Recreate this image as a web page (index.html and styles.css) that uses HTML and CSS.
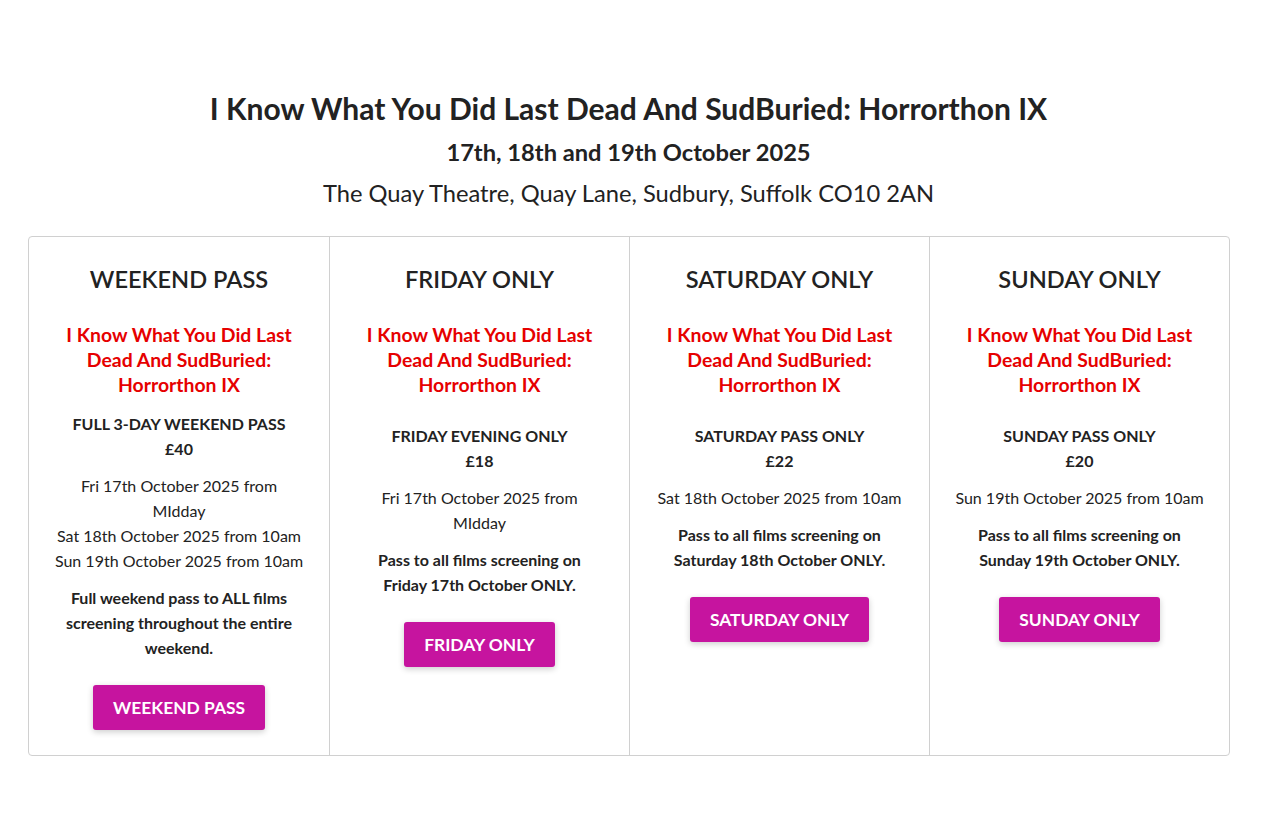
FILE: index.html
```html
<!DOCTYPE html>
<html lang="en">
<head>
    <meta charset="UTF-8">
    <meta name="viewport" content="width=device-width, initial-scale=1.0">
    <title>Horrorthon IX Tickets</title>
    <link rel="stylesheet" href="styles.css">
</head>
<body>
    <div class="page">
        <header class="event-header">
            <h1>I Know What You Did Last Dead And SudBuried: Horrorthon IX</h1>
            <h2>17th, 18th and 19th October 2025</h2>
            <p>The Quay Theatre, Quay Lane, Sudbury, Suffolk CO10 2AN</p>
        </header>

        <div class="passes">
            <div class="pass pass-weekend">
                <h3>WEEKEND PASS</h3>
                <h4>I Know What You Did Last Dead And SudBuried: Horrorthon IX</h4>
                <p class="pass-name">FULL 3-DAY WEEKEND PASS<br>£40</p>
                <p class="pass-dates">Fri 17th October 2025 from MIdday<br>Sat 18th October 2025 from 10am<br>Sun 19th October 2025 from 10am</p>
                <p class="pass-desc">Full weekend pass to ALL films screening throughout the entire weekend.</p>
                <button type="button">WEEKEND PASS</button>
            </div>
            <div class="pass">
                <h3>FRIDAY ONLY</h3>
                <h4>I Know What You Did Last Dead And SudBuried: Horrorthon IX</h4>
                <p class="pass-name">FRIDAY EVENING ONLY<br>£18</p>
                <p class="pass-dates">Fri 17th October 2025 from MIdday</p>
                <p class="pass-desc">Pass to all films screening on Friday 17th October ONLY.</p>
                <button type="button">FRIDAY ONLY</button>
            </div>
            <div class="pass">
                <h3>SATURDAY ONLY</h3>
                <h4>I Know What You Did Last Dead And SudBuried: Horrorthon IX</h4>
                <p class="pass-name">SATURDAY PASS ONLY<br>£22</p>
                <p class="pass-dates">Sat 18th October 2025 from 10am</p>
                <p class="pass-desc">Pass to all films screening on Saturday 18th October ONLY.</p>
                <button type="button">SATURDAY ONLY</button>
            </div>
            <div class="pass">
                <h3>SUNDAY ONLY</h3>
                <h4>I Know What You Did Last Dead And SudBuried: Horrorthon IX</h4>
                <p class="pass-name">SUNDAY PASS ONLY<br>£20</p>
                <p class="pass-dates">Sun 19th October 2025 from 10am</p>
                <p class="pass-desc">Pass to all films screening on Sunday 19th October ONLY.</p>
                <button type="button">SUNDAY ONLY</button>
            </div>
        </div>
    </div>
</body>
</html>
```

FILE: styles.css
```css
body {
    font-family: Lato, "Liberation Sans", sans-serif;
    margin: 0;
    padding: 0;
    background-color: #fff;
    color: #222;
}

.page {
    width: 1257px;
}

.event-header {
    text-align: center;
    padding-top: 89px;
}

.event-header h1 {
    font-size: 30px;
    font-weight: 700;
    line-height: 38px;
    margin: 0;
}

.event-header h2 {
    font-size: 23.7px;
    font-weight: 700;
    line-height: 30px;
    margin: 10px 0 0;
}

.event-header p {
    font-size: 23.7px;
    line-height: 30px;
    margin: 11px 0 0;
}

.passes {
    display: grid;
    grid-template-columns: repeat(4, 1fr);
    margin: 28px 27px 0 28px;
    border: 1px solid #d0d0d0;
    border-radius: 4px;
}

.pass {
    padding: 27px 25px 25px;
    text-align: center;
    border-left: 1px solid #d0d0d0;
}

.pass:first-child {
    border-left: none;
}

.pass h3 {
    font-size: 23.6px;
    font-weight: 600;
    line-height: 30px;
    margin: 0;
}

.pass h4 {
    font-size: 19.4px;
    font-weight: 700;
    line-height: 25px;
    color: #e60000;
    margin: 28px 0 0;
}

.pass p {
    font-size: 16px;
    line-height: 25px;
    margin: 12px 0 0;
}

.pass .pass-name {
    font-weight: 700;
    margin-top: 26px;
}

.pass-weekend .pass-name {
    margin-top: 14px;
}

.pass .pass-desc {
    font-weight: 700;
}

button {
    margin-top: 25px;
    padding: 0 20px;
    height: 45px;
    font-family: inherit;
    font-size: 17.4px;
    font-weight: 700;
    color: #fff;
    background-color: #c6149f;
    border: none;
    border-radius: 3px;
    box-shadow: 0 2px 6px rgba(0, 0, 0, 0.2);
    cursor: pointer;
}
```
